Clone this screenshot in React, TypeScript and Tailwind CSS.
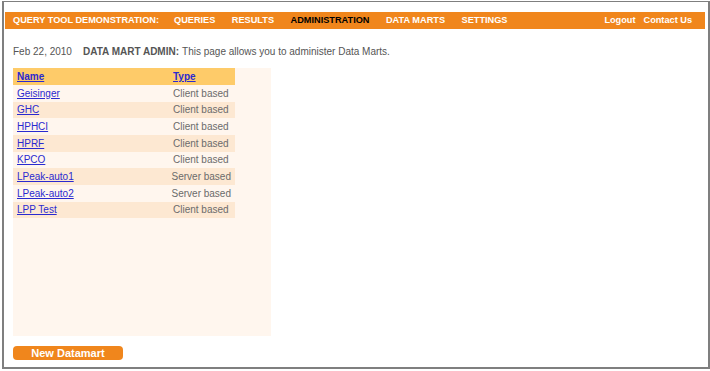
import React from 'react';

const marts = [
  { name: 'Geisinger', type: 'Client based' },
  { name: 'GHC', type: 'Client based' },
  { name: 'HPHCI', type: 'Client based' },
  { name: 'HPRF', type: 'Client based' },
  { name: 'KPCO', type: 'Client based' },
  { name: 'LPeak-auto1', type: 'Server based' },
  { name: 'LPeak-auto2', type: 'Server based' },
  { name: 'LPP Test', type: 'Client based' },
];

const navItems = ['QUERIES', 'RESULTS', 'ADMINISTRATION', 'DATA MARTS', 'SETTINGS'];

const App: React.FC = () => {
  return (
    <div className="bg-white w-[710px] h-[371px] pt-[1px] pl-[2px] font-['Liberation_Sans',Arial,sans-serif]">
      <div className="w-[708px] h-[368px] border-t border-x-2 border-b-2 border-[#7f7f7f] flex flex-col">
        <div className="mt-[10px] ml-[1px] w-[700px] h-[17px] bg-[#f0861c] flex items-center pl-[8px] pr-[13px] text-[9.2px] font-bold text-white whitespace-nowrap">
          <span className="mr-[15px]">QUERY TOOL DEMONSTRATION:</span>
          <div className="flex gap-[16.5px]">
            {navItems.map((item) => (
              <span key={item} className={item === 'ADMINISTRATION' ? 'text-black' : ''}>
                {item}
              </span>
            ))}
          </div>
          <div className="ml-auto flex gap-[8px]">
            <span>Logout</span>
            <span>Contact Us</span>
          </div>
        </div>

        <div className="mt-[16px] ml-[9px] flex items-center text-[10px] text-[#555] h-[12px] whitespace-nowrap">
          <span>Feb 22, 2010</span>
          <span className="ml-[11px] font-bold">DATA MART ADMIN:</span>
          <span className="ml-[3px]">This page allows you to administer Data Marts.</span>
        </div>

        <div className="mt-[11px] ml-[9px] w-[258px] h-[268px] bg-[#fff6ee]">
          <div className="w-[222px] text-[10px] whitespace-nowrap">
            <div className="h-[17px] bg-[#fecb69] flex items-center px-[4px] font-bold text-[#2a2ad0]">
              <span className="w-[156px] underline">Name</span>
              <span className="underline">Type</span>
            </div>
            {marts.map((m, i) => (
              <div
                key={m.name}
                className={`h-[16.67px] flex items-center px-[4px] ${i % 2 === 1 ? 'bg-[#fde8d2]' : ''}`}
              >
                <span className="w-[156px] underline text-[#2a2ad0]">{m.name}</span>
                <span className="text-[#6b6b6b]">{m.type}</span>
              </div>
            ))}
          </div>
        </div>

        <button className="mt-[10px] ml-[9px] w-[110px] h-[14px] rounded-[4px] bg-[#f0861c] text-white text-[11px] font-bold leading-none flex items-center justify-center">
          New Datamart
        </button>
      </div>
    </div>
  );
};

export default App;
